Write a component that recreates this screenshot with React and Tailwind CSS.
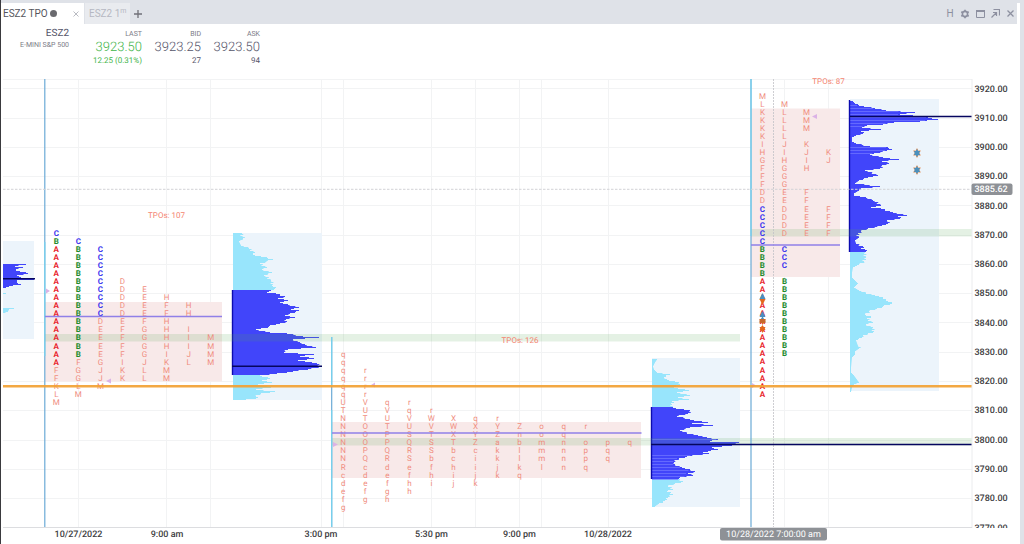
import React from "react";

const ROW = 8.05;
const COL = 22.05;

// Each column: [first row, letters]; a space leaves a row empty.
const sessions = [
  {
    x: 56.3, y: 233,
    columns: [
      [0, "CBAAAAAAAAAAAAAAAFFKLM"],
      [1, "CBBBBBBBBBBBBBBFGGLM"],
      [2, "CCCCCCCCCDEEEEGJJM"],
      [6, "DDDDDEFFFFIKK"],
      [7, "EEEEFGGGGJLL"],
      [8, "HFFHHHHIKMM"],
      [9, "HH IIIJL"],
      [13, "MMMM"],
    ],
  },
  {
    x: 343.2, y: 354,
    columns: [
      [0, "qqqqqqUTNNNNNNRcdefg"],
      [2, "rrrrVUTOOOPQcdefg"],
      [6, "qVUTPPQRdefgh"],
      [6, "rqVUSQRSefhh"],
      [7, "rWVTSSbfhi"],
      [8, "XWXTbchij"],
      [8, "qXYZciijk"],
      [8, "rYZakkjk"],
      [9, "Znbllkq"],
      [9, "oommml"],
      [9, "qqnnnn"],
      [9, "r oppq"],
      [11, "pqq"],
      [11, "q"],
    ],
  },
  {
    x: 762.4, y: 96,
    columns: [
      [0, "MLKKKKIHGFFFDDCCCCCBBBBAAAAAAAAAAAAAAA"],
      [1, "MLLLLJIHGGGEEDDDD CCC BBBBBBBBBB"],
      [2, "MMM KJIH  FFEEEE"],
      [7, "KJ     FFFF"],
    ],
  },
];

const opening = { A: "#e8222b", B: "#218a2b", C: "#3a33ee" };

const profiles = [
  {
    x: 3, box: [3, 241, 31, 98], value: [264, 288],
    points: [[264,23],[266,12],[267,20],[269,13],[271,17],[273,25],[275,14],[277,18],[279,31],[280,14],[282,14],[284,18],[286,6],[287,3],[288,0],[292,0],[293,3],[294,0],[307,0],[308,11],[309,6],[311,5],[313,0]],
  },
  {
    x: 233, box: [233, 233, 89, 167], value: [290, 375], edge: true,
    points: [[233,9],[238,10],[241,6],[245,8],[248,16],[252,22],[254,20],[259,40],[263,27],[267,34],[269,29],[272,39],[275,31],[280,38],[285,39],[288,42],[290,38],[292,34],[293,43],[296,52],[298,45],[300,55],[302,47],[304,55],[307,66],[309,58],[310,66],[313,57],[315,52],[317,62],[319,53],[321,54],[323,47],[325,37],[327,35],[329,23],[332,37],[333,54],[336,70],[337,86],[339,60],[342,67],[344,72],[347,83],[349,55],[352,51],[354,81],[356,67],[358,81],[360,65],[362,79],[363,84],[366,88],[369,75],[371,60],[373,44],[375,27],[376,29],[378,37],[380,29],[382,39],[384,25],[387,38],[389,23],[391,42],[393,28],[396,23],[398,23],[399,13]],
  },
  {
    x: 652, box: [652, 358, 88, 149], value: [407, 479], edge: true,
    stripes: [[439, 441], [455, 479]],
    points: [[359,5],[362,3],[366,1],[369,2],[372,5],[374,18],[377,12],[379,15],[382,27],[384,28],[387,22],[390,37],[392,25],[395,38],[397,26],[399,37],[401,20],[404,20],[407,21],[408,24],[410,38],[413,36],[416,25],[419,38],[422,56],[423,40],[425,61],[427,38],[430,28],[433,35],[435,46],[437,55],[439,66],[441,58],[442,87],[445,80],[447,60],[449,66],[452,51],[453,57],[456,35],[458,27],[462,22],[464,23],[467,30],[469,38],[471,43],[473,36],[475,41],[477,28],[479,28],[481,31],[483,23],[486,16],[489,21],[491,15],[494,21],[497,16],[500,13],[503,7],[506,3]],
  },
  {
    x: 850, box: [850, 99, 89, 292], value: [100, 252], edge: true,
    stripes: [[105, 128], [147, 155]],
    points: [[101,3],[103,5],[106,14],[108,25],[110,36],[112,65],[114,50],[116,80],[117,78],[119,88],[121,70],[122,44],[124,33],[125,17],[127,12],[129,31],[131,11],[133,13],[135,6],[137,2],[141,2],[143,6],[146,20],[147,38],[149,42],[150,37],[153,24],[154,20],[157,33],[159,49],[161,32],[163,39],[165,32],[168,30],[170,15],[175,28],[177,18],[180,9],[183,5],[186,30],[188,11],[190,9],[193,4],[195,4],[197,16],[200,23],[205,31],[207,21],[208,31],[212,43],[215,57],[216,48],[218,50],[220,37],[223,38],[225,32],[228,18],[231,11],[233,8],[237,9],[240,5],[243,6],[246,13],[248,11],[250,17],[252,15],[257,16],[261,14],[264,9],[267,3],[272,2],[277,2],[280,5],[283,8],[287,4],[290,9],[293,16],[295,25],[297,33],[300,36],[303,42],[306,33],[308,27],[311,19],[314,15],[316,21],[318,17],[322,23],[324,16],[327,23],[331,24],[333,18],[337,12],[340,6],[348,9],[351,5],[354,5],[357,2],[367,1],[372,1],[375,4],[382,9],[384,4],[387,2],[391,1]],
  },
];

function widthAt(points, y) {
  for (let i = 1; i < points.length; i++) {
    const [y0, w0] = points[i - 1];
    const [y1, w1] = points[i];
    if (y >= y0 && y <= y1) {
      const w = w0 + ((w1 - w0) * (y - y0)) / (y1 - y0);
      const jag = w > 8 ? ((y * 7) % 5) - 2 : 0;
      return y === y0 || y === y1 ? w : w + jag;
    }
  }
  return 0;
}

function profilePath(p, from, to) {
  let d = `M${p.x} ${from}`;
  for (let y = from; y < to; y++) d += `H${(p.x + widthAt(p.points, y)).toFixed(1)}V${y + 1}`;
  return d + `H${p.x}Z`;
}

function Profile({ p }) {
  const [x, y, w, h] = p.box;
  const [v0, v1] = p.value;
  const top = p.points[0][0];
  const bottom = p.points[p.points.length - 1][0] + 1;
  const lines = [];
  (p.stripes || []).forEach(([a, b]) => {
    for (let s = a; s <= b; s += 3) lines.push(s);
  });
  return (
    <g>
      <rect x={x} y={y} width={w} height={h} fill="#ecf4fb" />
      {top < v0 && <path d={profilePath(p, top, v0)} fill="#98e5fc" />}
      <path d={profilePath(p, v1, bottom)} fill="#98e5fc" />
      <path d={profilePath(p, Math.max(v0, top), v1)} fill="#4145fa" />
      {lines.map((s) => (
        <path key={s} d={`M${p.x} ${s + 0.5}h${Math.max(0, widthAt(p.points, s) - 2)}`} stroke="#7478ff" strokeWidth="0.7" />
      ))}
      {p.edge && <path d={`M${p.x - 0.5} ${v0}V${v1}`} stroke="#0c0cb0" strokeWidth="1.4" />}
    </g>
  );
}

function Letters({ s }) {
  return s.columns.map(([start, letters], c) =>
    [...letters].map((ch, i) =>
      ch === " " ? null : (
        <text
          key={`${c}-${i}`}
          x={s.x + c * COL}
          y={s.y + (start + i) * ROW + 2.8}
          fill={opening[ch] || "#f08d80"}
          fontWeight={opening[ch] ? 700 : 400}
        >
          {ch}
        </text>
      )
    )
  );
}

function Up({ x, y }) {
  return <path d={`M${x} ${y - 4}l3 6h-6z`} fill="#4a8fc0" />;
}
function Down({ x, y }) {
  return <path d={`M${x} ${y + 4}l3 -6h-6z`} fill="#e3671d" />;
}
function Star({ x, y }) {
  return (
    <g>
      <path d={`M${x} ${y - 5}l3.8 7.500h-7.600zM${x} ${y + 5}l3.800 -7.500h-7.600z`} fill="#e58a4c" />
      <path d={`M${x} ${y - 4}l1.200 2h1.800l-.8 2 .8 2h-1.800l-1.200 2-1.200-2h-1.800l.8-2-.8-2h1.800z`} fill="#4a90bd" />
    </g>
  );
}

const prices = Array.from({ length: 16 }, (_, i) => 3920 - i * 10);
const priceY = (p) => 88.3 + ((3920 - p) * 29.27) / 10;
const times = [[78.5, "10/27/2022"], [167, "9:00 am"], [321, "3:00 pm"], [431.5, "5:30 pm"], [519.5, "9:00 pm"], [608, "10/28/2022"]];
const gridX = [78.5, 166.5, 210.5, 321.5, 343.5, 431.5, 475.5, 519.5, 541.5, 608.5, 784.5, 828.5];

function Chart() {
  return (
    <svg
      viewBox="1 79 1019 465"
      className="block w-full overflow-visible font-['Roboto',sans-serif]"
      textRendering="geometricPrecision"
      role="img"
      aria-label="ESZ2 market profile"
    >
      <defs>
        <clipPath id="plot"><rect x="1" y="76" width="1019" height="452" /></clipPath>
      </defs>
      <g clipPath="url(#plot)">
        <g stroke="#f2f3f4" strokeWidth="1">
          {prices.map((p) => <path key={p} d={`M3 ${Math.round(priceY(p)) + 0.5}H972`} />)}
          {gridX.map((x) => <path key={x} d={`M${x} 79V528`} />)}
          <path d="M3 79.5H972" />
        </g>
        <rect x="45" y="302" width="177" height="79.5" fill="#f8e9e9" />
        <rect x="332" y="422" width="309" height="56" fill="#f8e9e9" />
        <rect x="751" y="108.5" width="89" height="168.5" fill="#f8e9e9" />
        {profiles.map((p) => <Profile key={p.x} p={p} />)}
        <g fill="#58a858" fillOpacity="0.16">
          <rect x="45" y="334" width="695" height="7.5" />
          <rect x="332" y="438" width="640" height="7.5" />
          <rect x="751" y="229" width="221" height="7.5" />
        </g>
        <path d="M44.800 79V528M331.700 337V528M751 79V528" stroke="#6cabd6" strokeWidth="1.200" />
        <path d="M44.800 242V356M331.700 337V386M331.700 410V528M751 79V236" stroke="#78d2ee" strokeWidth="1.200" />
        <path d="M773.5 79V528" stroke="#c2c2c6" strokeWidth="0.8" strokeDasharray="2 1" />
        <path d="M3 189.3H972" stroke="#d2d2d6" strokeWidth="1" strokeDasharray="2.5 1.5" />
        <path
          d="M46 288.500v5l4-2.500zM111 378.500v5l-5-2.500zM375 382.500v5l-4-2.500zM333 442v5l5-2.500zM817 114v5l-5-2.500zM752 383v5l4-2.500z"
          fill="#dbb2e6"
        />
        <g fontSize="8" textAnchor="middle">
          {sessions.map((s) => <Letters key={s.x} s={s} />)}
          <g fill="#f4836f">
            <text x="166.500" y="218">TPOs: 107</text>
            <text x="520" y="343">TPOs: 126</text>
            <text x="828.500" y="84">TPOs: 87</text>
          </g>
        </g>
        <path d="M45 316.500H222M332 433H641.500M751 245H840" stroke="#9080e8" strokeWidth="1.5" />
        <path d="M3 386.200H972" stroke="#f2a133" strokeWidth="2.400" strokeOpacity="0.92" />
        <path d="M3 278.700H35M232 366.300H322M651 444.500H972M850 116.500H972" stroke="#06065f" strokeWidth="1.500" />
        <Down x={762.5} y={301} /><Up x={762.5} y={297} />
        <Down x={762.5} y={321} /><Up x={762.5} y={320} /><Up x={762.5} y={315} />
        <path d="M759.500 319h6v4h-6z" fill="#c8682c" />
        <Down x={762.5} y={329} />
        <path d="M762.500 325l3 5h-6z" fill="#e3671d" />
        <Star x={917} y={153} />
        <Star x={917} y={170} />
        <path d="M972 79V528" stroke="#ebecee" />
        <g fontSize="9" fontWeight="500" fill="#3c3c40">
          {prices.map((p) => <text key={p} x="974.500" y={priceY(p) + 3.200}>{p}.00</text>)}
        </g>
      </g>
      <path d="M3 527.500H972" stroke="#dcdde0" />
      <rect x="971.500" y="183.500" width="41" height="11.500" rx="2" fill="#8e9196" />
      <text x="974.500" y="192.300" fontSize="9" fontWeight="500" fill="#fff">3885.62</text>
      <g fontSize="9" fontWeight="500" fill="#3c3c40" textAnchor="middle">
        {times.map(([x, t]) => <text key={x} x={x} y="537">{t}</text>)}
      </g>
      <rect x="720" y="528" width="107" height="12.500" rx="2" fill="#8e9196" />
      <text x="773.500" y="537.300" fontSize="9" fill="#fff" textAnchor="middle">10/28/2022 7:00:00 am</text>
    </svg>
  );
}

function Quote({ label, price, note, className = "text-[#55556a]" }) {
  return (
    <div className={`flex flex-col text-right ${className}`}>
      <span className="h-3 text-[7px] leading-3 text-[#7b7b86]">{label}</span>
      <span className="text-[13px] leading-4 font-light">{price}</span>
      <span className="text-[8px] leading-[10px]">{note}</span>
    </div>
  );
}

const iconButton = "flex h-3 w-3 items-center justify-center";

export default function App() {
  return (
    <div className="min-h-screen border-l border-[#3a3a3e] bg-[#dfe2e8] pt-[3px] font-['Roboto',sans-serif] [text-rendering:geometricPrecision]">
      <main className="mr-1 min-h-[541px] bg-white">
        <header className="mr-[3px] flex h-[21px] items-stretch bg-[#dfe2e8] text-[10px] text-[#55555c]">
          <div className="flex w-[83px] items-center bg-white pl-[2px]">
            <button type="button" className="flex items-center gap-[2px]">
              ESZ2 TPO
              <span className="h-[7px] w-[7px] rounded-full bg-[#6a6a6e]" />
            </button>
            <button type="button" aria-label="Close tab" className="mr-1 ml-auto flex h-2 w-2 items-center justify-center">
              <svg width="6" height="6" viewBox="0 0 6 6" stroke="#b9bbc2"><path d="M.5.5l5 5M5.500.5l-5 5" /></svg>
            </button>
          </div>
          <button type="button" className="ml-px flex w-[45px] items-center bg-[#e9ebef] pl-1 text-[#b6b8c2]">
            ESZ2 1<span className="-mt-1 text-[7px]">m</span>
          </button>
          <button type="button" aria-label="Add tab" className="flex w-4 items-center justify-center">
            <svg width="8" height="8" viewBox="0 0 8 8" stroke="#707078" strokeWidth="1.300"><path d="M4 0v8M0 4h8" /></svg>
          </button>
          <div className="ml-auto flex items-center gap-[3px] pr-px text-[#8d90a0]">
            <button type="button" className={iconButton}>H</button>
            <button type="button" aria-label="Settings" className={iconButton}>
              <svg width="10" height="10" viewBox="0 0 10 10" fill="none" stroke="currentColor">
                <circle cx="5" cy="5" r="2.600" strokeWidth="1.600" />
                <path d="M5 .7v1.400M5 7.900v1.400M1.300 2.850l1.200.7M7.500 6.450l1.200.7M1.300 7.150l1.200-.7M7.500 3.550l1.200-.7" strokeWidth="1.700" />
              </svg>
            </button>
            <button type="button" aria-label="Window" className={iconButton}>
              <svg width="9" height="8" viewBox="0 0 9 8" fill="none" stroke="currentColor"><path d="M.5 1h8v6.500h-8z" /><path d="M0 1h9" strokeWidth="2" /></svg>
            </button>
            <button type="button" aria-label="Pop out" className={iconButton}>
              <svg width="9" height="9" viewBox="0 0 9 9" fill="none" stroke="currentColor" strokeWidth="1.200"><path d="M2.500.5h6v6M.5 8.500l5-5M2 3.500h3.500V7" /></svg>
            </button>
            <button type="button" aria-label="Close" className={iconButton}>
              <svg width="7" height="7" viewBox="0 0 7 7" stroke="currentColor" strokeWidth="1.300"><path d="M.5.5l6 6M6.500.5l-6 6" /></svg>
            </button>
          </div>
        </header>
        <section className="flex h-[55px] pt-1 text-[#55556a]">
          <div className="w-[68px] text-right">
            <div className="text-[10px] leading-[11px]">ESZ2</div>
            <div className="text-[7px] leading-3 text-[#7b7b86]">E-MINI S&amp;P 500</div>
          </div>
          <div className="flex w-[73px] flex-col"><Quote label="LAST" price="3923.50" note="12.25 (0.31%)" className="text-[#3fb54a]" /></div>
          <div className="flex w-[59px] flex-col"><Quote label="BID" price="3923.25" note="27" /></div>
          <div className="flex w-[59px] flex-col"><Quote label="ASK" price="3923.50" note="94" /></div>
        </section>
        <Chart />
      </main>
    </div>
  );
}
